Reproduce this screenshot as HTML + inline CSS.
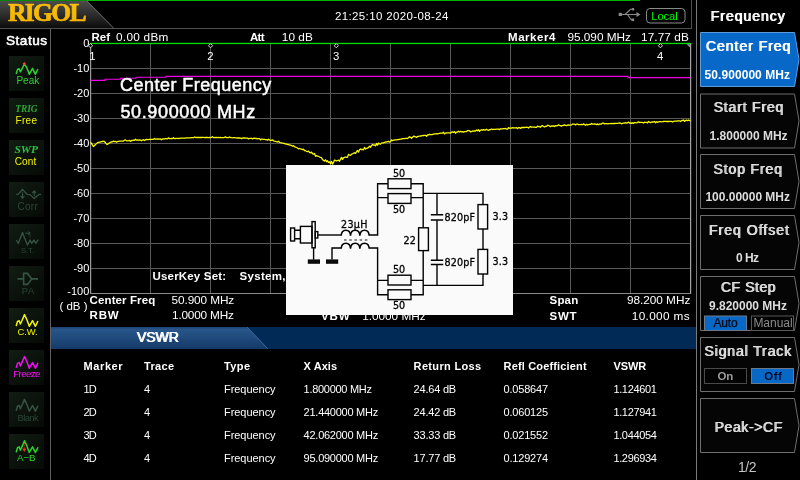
<!DOCTYPE html>
<html lang="en"><head><meta charset="utf-8"><title>RIGOL Spectrum Analyzer - VSWR</title>
<style>
html,body{margin:0;padding:0;background:#000;}
body{width:800px;height:480px;overflow:hidden;position:relative;font-family:"Liberation Sans",Arial,sans-serif;}
svg{position:absolute;left:0;top:0;display:block}
svg{font-family:"Liberation Sans",Arial,sans-serif;will-change:transform}
text{white-space:pre}
</style></head><body>
<svg width="800" height="480" viewBox="0 0 800 480">
<defs>
<linearGradient id="lg" x1="0" y1="0" x2="0" y2="1"><stop offset="0" stop-color="#4c4c4c"/><stop offset="0.55" stop-color="#2a2a2a"/><stop offset="1" stop-color="#0c0c0c"/></linearGradient>
<linearGradient id="gold" x1="0" y1="0" x2="0" y2="1"><stop offset="0" stop-color="#ffc20a"/><stop offset="1" stop-color="#f2b000"/></linearGradient>
<linearGradient id="bar" x1="0" y1="0" x2="0" y2="1"><stop offset="0" stop-color="#1d4472"/><stop offset="0.12" stop-color="#28568a"/><stop offset="1" stop-color="#143a68"/></linearGradient>
<linearGradient id="ib" x1="0" y1="0" x2="1" y2="1"><stop offset="0" stop-color="#121d13"/><stop offset="0.5" stop-color="#0b130c"/><stop offset="1" stop-color="#060a06"/></linearGradient>
<filter id="fb" x="-5%" y="-20%" width="110%" height="140%"><feOffset dx="0.9" dy="0" result="o"/><feMerge><feMergeNode in="SourceGraphic"/><feMergeNode in="o"/></feMerge></filter>
<path id="wave" d="M16.3,17.3 L17.5,13.3 L19.2,12.5 L20.4,15.8 L22.1,12 L24.5,6.4 L26.9,11.5 L29.3,18.1 L32.5,12.5 L35.4,18.1 L37.7,13.3" fill="none" stroke-width="1.5" stroke-linejoin="round" stroke-linecap="round"/>
<path id="wavep" d="M16.3,17.5 L17.5,13.6 L19.2,12.8 L20.4,15.9 L22,13 L24.4,8 L26.9,12 L29.3,18.4 L32.5,12.4 L35.4,18.4 L37.6,13.6" fill="none" stroke-width="1.5" stroke-linejoin="round" stroke-linecap="round"/>
</defs>
<rect width="800" height="480" fill="#000"/>

<polygon points="0,1 87,1 113.5,28 0,28" fill="url(#lg)"/>
<line x1="87" y1="1" x2="113.5" y2="28" stroke="#6a6a6a" stroke-width="1"/>
<rect x="0" y="0" width="87" height="1" fill="#008800"/>
<rect x="87" y="0" width="553" height="1" fill="#00b400"/>
<rect x="0" y="28" width="692" height="1" fill="#505050"/>
<rect x="691" y="0" width="1" height="29" fill="#505050"/>
<rect x="50" y="29" width="1" height="451" fill="#606060"/>
<rect x="696" y="0" width="1" height="480" fill="#7a7a7a"/>
<text x="8" y="21.3" font-size="25.6" font-weight="bold" fill="url(#gold)" textLength="78.6" lengthAdjust="spacing" font-family="Liberation Serif, Times New Roman, serif"  stroke="url(#gold)" stroke-width="0.7" stroke-linejoin="round">RIGOL</text>
<text x="335" y="20.45" font-size="11.5" fill="#fff" textLength="113.4" lengthAdjust="spacing">21:25:10 2020-08-24</text>
<g transform="translate(0,-0.5)" stroke="#8a8a8a" fill="#8a8a8a" stroke-width="1.1"><line x1="620" y1="15" x2="638" y2="15"/><rect x="618.7" y="13.3" width="3.2" height="3.2" stroke="none"/><polygon points="640.5,15 636.5,12.5 636.5,17.5" stroke="none"/><path d="M625,15 L630.5,9.8 L633,9.8" fill="none"/><path d="M627.5,15 L631,20.3 L632.5,20.3" fill="none"/><circle cx="633" cy="9.8" r="1.3" stroke="none"/><rect x="631.5" y="19" width="2.6" height="2.6" stroke="none"/></g>
<rect x="646.5" y="8.5" width="38.5" height="14.5" rx="3.5" fill="none" stroke="#8a8a8a" stroke-width="1"/>
<text x="651.2" y="20" font-size="11.2" fill="#00fa00" textLength="26.6" lengthAdjust="spacing">Local</text>
<text x="6" y="44.9" font-size="13.6" fill="#fff" textLength="41" lengthAdjust="spacing"  stroke="#fff" stroke-width="0.55" stroke-linejoin="round">Status</text>
<rect x="9" y="56" width="35" height="35" fill="url(#ib)"/>
<rect x="9" y="98" width="35" height="35" fill="url(#ib)"/>
<rect x="9" y="140" width="35" height="35" fill="url(#ib)"/>
<rect x="9" y="182" width="35" height="35" fill="url(#ib)"/>
<rect x="9" y="224" width="35" height="35" fill="url(#ib)"/>
<rect x="9" y="266" width="35" height="35" fill="url(#ib)"/>
<rect x="9" y="308" width="35" height="35" fill="url(#ib)"/>
<rect x="9" y="350" width="35" height="35" fill="url(#ib)"/>
<rect x="9" y="392" width="35" height="35" fill="url(#ib)"/>
<rect x="9" y="434" width="35" height="35" fill="url(#ib)"/>
<use href="#wavep" y="55.9" stroke="#2fd22f"/>
<path d="M24.3,61.6 L25,63 L26.3,63.6 L25,64.2 L24.3,65.6 L23.6,64.2 L22.3,63.6 L23.6,63 Z" fill="#f04030"/>
<text x="16.4" y="83.7" font-size="10" fill="#2fd22f" textLength="22.8" lengthAdjust="spacing">Peak</text>
<text x="15.2" y="111.6" font-size="9.4" font-weight="bold" fill="#2fa83a" textLength="22.4" lengthAdjust="spacing" font-family="Liberation Serif, Times New Roman, serif" font-style="italic">TRIG</text>
<text x="15.6" y="123.6" font-size="10" fill="#f4f400" textLength="21.4" lengthAdjust="spacing">Free</text>
<g transform="translate(14.4,152.8) scale(1.2,1)">
<text x="0" y="0" font-size="9.6" font-weight="bold" fill="#2fc040" font-family="Liberation Serif, Times New Roman, serif" font-style="italic">SWP</text>
</g>
<text x="14.8" y="165" font-size="10" fill="#f4f400" textLength="21.4" lengthAdjust="spacing">Cont</text>
<g stroke="#365442" fill="none" stroke-width="1.3" stroke-linejoin="round"><path d="M16.2,194.3 L18.4,194.2 L22.5,189.4 L27,194.3 L30,194.6 L34.2,198.6 L39.2,194.3 L41,194.3"/><path d="M22.5,192.4 V198 M20.6,196 L22.5,198.4 L24.4,196" stroke-width="1.1"/><path d="M34.2,196.2 V191.2 M32.3,193.2 L34.2,190.8 L36.1,193.2" stroke-width="1.1"/></g>
<text x="17.6" y="209.6" font-size="10" fill="#2b4737" textLength="20.2" lengthAdjust="spacing">Corr</text>
<g stroke="#365442" fill="none" stroke-width="1.3" stroke-linejoin="round"><path d="M16.3,240 L18.3,243.4 L20.4,238 L22.5,232.6 L24.6,238 L27.5,245 L30,240 L31.7,243.4 L33.8,240 L35.8,243.4 L38.3,239.6"/><path d="M25.4,233.2 H30 M28.2,231.6 L30.2,233.2 L28.2,234.8" stroke-width="1"/><path d="M30,234.5 V238.5" stroke-width="1" stroke-dasharray="1,1"/></g>
<text x="21" y="252.6" font-size="7.6" fill="#2b4737" textLength="13" lengthAdjust="spacing">S.T.</text>
<g stroke="#365442" fill="none" stroke-width="1.6" stroke-linejoin="miter"><path d="M17.5,278.9 H23.5 M31.7,278.9 H38"/><path d="M23.6,273.4 H27.5 L31.7,278.9 L27.5,284.4 H23.6 Z"/></g>
<text x="21.7" y="293.6" font-size="9.4" fill="#2b4737" textLength="12.6" lengthAdjust="spacing">PA</text>
<use href="#wave" y="308.2" stroke="#f4f400"/>
<text x="17.6" y="335" font-size="9.4" fill="#f4f400" textLength="20" lengthAdjust="spacing">C.W.</text>
<use href="#wave" y="350.1" stroke="#f010f0"/>
<text x="13.3" y="376.9" font-size="9.8" fill="#f010f0" textLength="27.2" lengthAdjust="spacing">Freeze</text>
<use href="#wave" y="393" stroke="#365442"/>
<text x="17.6" y="420.6" font-size="9.4" fill="#2b4737" textLength="21" lengthAdjust="spacing">Blank</text>
<use href="#wave" y="434.4" stroke="#2fd22f"/>
<path d="M24.3,443 L24.3,449" stroke="#f03020" stroke-width="1" stroke-dasharray="1.2,1" fill="none"/><path d="M22.3,448.5 L26.3,448.5 L24.3,452 Z" fill="#f03020"/>
<text x="17" y="461" font-size="9.8" fill="#2fd22f" textLength="18.6" lengthAdjust="spacing">A−B</text>
<rect x="150" y="44" width="1" height="250" fill="#585858"/>
<rect x="210" y="44" width="1" height="250" fill="#585858"/>
<rect x="270" y="44" width="1" height="250" fill="#585858"/>
<rect x="330" y="44" width="1" height="250" fill="#585858"/>
<rect x="390" y="44" width="1" height="250" fill="#585858"/>
<rect x="450" y="44" width="1" height="250" fill="#585858"/>
<rect x="510" y="44" width="1" height="250" fill="#585858"/>
<rect x="570" y="44" width="1" height="250" fill="#585858"/>
<rect x="630" y="44" width="1" height="250" fill="#585858"/>
<rect x="90" y="68" width="601" height="1" fill="#585858"/>
<rect x="90" y="93" width="601" height="1" fill="#585858"/>
<rect x="90" y="118" width="601" height="1" fill="#585858"/>
<rect x="90" y="143" width="601" height="1" fill="#585858"/>
<rect x="90" y="168" width="601" height="1" fill="#585858"/>
<rect x="90" y="193" width="601" height="1" fill="#585858"/>
<rect x="90" y="218" width="601" height="1" fill="#585858"/>
<rect x="90" y="243" width="601" height="1" fill="#585858"/>
<rect x="90" y="268" width="601" height="1" fill="#585858"/>
<rect x="90" y="43" width="1.2" height="251" fill="#9a9a9a"/>
<rect x="690" y="43" width="1.2" height="251" fill="#a4a4a4"/>
<rect x="90" y="293" width="601" height="1" fill="#8a8a8a"/>
<rect x="90" y="42.8" width="601" height="1.3" fill="#00e000"/>
<polygon points="686.5,44.3 690,44.3 690,47.5" fill="#909090"/>
<text x="89.3" y="47" font-size="11" fill="#fff" text-anchor="end">0</text>
<text x="89.3" y="72" font-size="11" fill="#fff" text-anchor="end">-10</text>
<text x="89.3" y="97" font-size="11" fill="#fff" text-anchor="end">-20</text>
<text x="89.3" y="122" font-size="11" fill="#fff" text-anchor="end">-30</text>
<text x="89.3" y="147" font-size="11" fill="#fff" text-anchor="end">-40</text>
<text x="89.3" y="172" font-size="11" fill="#fff" text-anchor="end">-50</text>
<text x="89.3" y="197" font-size="11" fill="#fff" text-anchor="end">-60</text>
<text x="89.3" y="222" font-size="11" fill="#fff" text-anchor="end">-70</text>
<text x="89.3" y="247" font-size="11" fill="#fff" text-anchor="end">-80</text>
<text x="89.3" y="272" font-size="11" fill="#fff" text-anchor="end">-90</text>
<text x="89.3" y="295.4" font-size="11" fill="#fff" text-anchor="end">-100</text>
<text x="59.5" y="310.2" font-size="11.5" fill="#fff" textLength="28" lengthAdjust="spacing">( dB )</text>
<text x="91.5" y="41.35" font-size="11.5" font-weight="bold" fill="#fff" textLength="18.6" lengthAdjust="spacing">Ref</text>
<text x="116" y="41.35" font-size="11.8" fill="#fff" textLength="52.4" lengthAdjust="spacing">0.00 dBm</text>
<text x="250" y="41.35" font-size="11.5" font-weight="bold" fill="#fff" textLength="14.6" lengthAdjust="spacing">Att</text>
<text x="281.8" y="41.35" font-size="11.8" fill="#fff" textLength="31" lengthAdjust="spacing">10 dB</text>
<text x="508" y="41.35" font-size="11.5" font-weight="bold" fill="#fff" textLength="47.4" lengthAdjust="spacing">Marker4</text>
<text x="567.6" y="41.35" font-size="11.8" fill="#fff" textLength="63.2" lengthAdjust="spacing">95.090 MHz</text>
<text x="641" y="41.35" font-size="11.8" fill="#fff" textLength="47.8" lengthAdjust="spacing">17.77 dB</text>
<path d="M90.5,43.6 L92.6,45.7 L90.5,47.8 L88.4,45.7 Z" fill="#000" stroke="#f0f0f0" stroke-width="0.9"/>
<text x="89.2" y="59.8" font-size="11.3" fill="#fff">1</text>
<path d="M210.5,43.6 L212.6,45.7 L210.5,47.8 L208.4,45.7 Z" fill="#000" stroke="#f0f0f0" stroke-width="0.9"/>
<text x="207.2" y="59.8" font-size="11.3" fill="#fff">2</text>
<path d="M336.3,43.6 L338.40000000000003,45.7 L336.3,47.8 L334.2,45.7 Z" fill="#000" stroke="#f0f0f0" stroke-width="0.9"/>
<text x="333.0" y="59.8" font-size="11.3" fill="#fff">3</text>
<path d="M660.4,43.6 L662.5,45.7 L660.4,47.8 L658.3,45.7 Z" fill="#000" stroke="#f0f0f0" stroke-width="0.9"/>
<text x="657.1" y="59.8" font-size="11.3" fill="#fff">4</text>
<path d="M90.5,80.4 H105 V79.3 H120.4 V78.3 H136 V77.3 H166 V76.4 H628 V77.6 H690.5" fill="none" stroke="#f000e8" stroke-width="1.1"/>
<path d="M90.5,142.0 L91.0,142.8 L91.5,143.5 L92.0,144.2 L92.5,145.0 L93.0,145.8 L93.5,146.5 L94.0,146.0 L94.5,145.5 L95.0,145.0 L95.5,144.6 L96.0,144.1 L96.5,143.6 L97.0,143.1 L97.5,142.6 L98.0,142.5 L98.5,142.4 L99.0,142.3 L99.5,142.2 L100.0,142.1 L100.5,142.0 L101.0,141.8 L101.5,141.7 L102.0,141.6 L102.5,141.5 L103.0,141.4 L103.5,141.3 L104.0,141.2 L104.5,141.8 L105.0,142.3 L105.5,142.8 L106.0,143.4 L106.5,143.9 L107.0,144.5 L107.5,144.2 L108.0,143.9 L108.5,143.6 L109.0,143.2 L109.5,142.9 L110.0,142.6 L110.5,142.3 L111.0,142.0 L111.5,142.0 L112.0,141.9 L112.5,141.8 L113.5,141.1 L114.5,141.6 L115.5,141.5 L116.5,142.1 L117.5,141.5 L118.5,141.4 L119.5,141.2 L120.5,141.1 L121.5,141.2 L122.5,141.1 L123.5,141.0 L124.5,140.2 L125.5,140.0 L126.5,140.8 L127.5,140.8 L128.5,140.7 L129.5,140.5 L130.5,141.4 L131.5,140.5 L132.5,140.3 L133.5,140.2 L134.5,140.3 L135.5,139.3 L136.5,140.2 L137.5,140.0 L138.5,140.1 L139.5,140.0 L140.5,140.1 L141.5,140.8 L142.5,140.0 L143.5,139.7 L144.5,140.5 L145.5,139.7 L146.5,139.5 L147.5,139.6 L148.5,139.6 L149.5,139.3 L150.5,139.3 L151.5,139.3 L152.5,139.4 L153.5,139.3 L154.5,138.5 L155.5,139.1 L156.5,139.2 L157.5,139.0 L158.5,139.0 L159.5,139.2 L160.5,139.0 L161.5,139.8 L162.5,138.9 L163.5,138.9 L164.5,139.0 L165.5,138.7 L166.5,138.7 L167.5,138.8 L168.5,137.9 L169.5,138.6 L170.5,138.6 L171.5,138.5 L172.5,138.7 L173.5,137.6 L174.5,138.6 L175.5,138.5 L176.5,138.3 L177.5,138.4 L178.5,138.5 L179.5,138.3 L180.5,138.2 L181.5,138.2 L182.5,138.1 L183.5,138.1 L184.5,138.1 L185.5,138.1 L186.5,137.9 L187.5,137.9 L188.5,137.8 L189.5,137.9 L190.5,137.8 L191.5,137.6 L192.5,137.6 L193.5,137.7 L194.5,137.0 L195.5,137.4 L196.5,137.5 L197.5,137.5 L198.5,137.5 L199.5,137.3 L200.5,137.5 L201.5,137.5 L202.5,137.3 L203.5,137.4 L204.5,137.6 L205.5,137.4 L206.5,137.5 L207.5,137.4 L208.5,137.6 L209.5,137.4 L210.5,137.6 L211.5,137.4 L212.5,136.6 L213.5,137.6 L214.5,137.6 L215.5,137.4 L216.5,137.5 L217.5,137.6 L218.5,137.5 L219.5,137.7 L220.5,137.5 L221.5,137.7 L222.5,137.7 L223.5,137.6 L224.5,137.4 L225.5,136.8 L226.5,137.6 L227.5,137.6 L228.5,137.6 L229.5,137.0 L230.5,137.5 L231.5,137.7 L232.5,137.8 L233.5,137.7 L234.5,137.7 L235.5,137.8 L236.5,137.8 L237.5,138.0 L238.5,138.0 L239.5,137.8 L240.5,138.1 L241.5,138.6 L242.5,138.1 L243.5,137.9 L244.5,138.0 L245.5,138.2 L246.5,138.1 L247.5,138.1 L248.5,138.9 L249.5,138.3 L250.5,138.3 L251.5,138.3 L252.5,138.9 L253.5,138.4 L254.5,138.2 L255.5,138.5 L256.5,138.4 L257.5,138.8 L258.5,138.7 L259.5,138.7 L260.5,139.9 L261.5,139.1 L262.5,139.2 L263.5,139.3 L264.5,139.4 L265.5,139.6 L266.5,139.7 L267.5,140.2 L268.5,139.2 L269.5,139.9 L270.5,140.3 L271.5,140.3 L272.5,139.8 L273.5,140.8 L274.5,141.2 L275.5,141.3 L276.5,141.7 L277.5,142.0 L278.5,141.2 L279.5,142.3 L280.5,142.7 L281.5,142.9 L282.5,143.2 L283.5,143.3 L284.5,143.5 L285.5,144.0 L286.5,144.0 L287.5,144.5 L288.5,144.5 L289.5,145.0 L290.5,145.1 L291.5,145.5 L292.5,146.1 L293.5,145.7 L294.5,146.7 L295.5,147.2 L296.5,147.5 L297.5,148.0 L298.5,148.8 L299.5,148.5 L300.5,148.9 L301.5,149.2 L302.5,149.6 L303.5,149.2 L304.5,150.6 L305.5,150.7 L306.5,151.3 L307.5,151.6 L308.5,151.1 L309.5,152.4 L310.5,152.8 L311.5,152.1 L312.5,153.7 L313.5,154.2 L314.5,153.4 L315.5,156.3 L316.5,155.6 L317.5,156.1 L318.5,156.3 L319.5,157.0 L320.5,157.4 L321.5,157.7 L322.5,159.6 L323.5,160.4 L324.5,161.0 L325.5,159.8 L326.5,161.8 L327.5,160.8 L328.5,162.5 L329.5,161.8 L330.5,163.8 L331.5,161.4 L332.5,164.1 L333.5,162.4 L334.5,160.1 L335.5,160.4 L336.5,161.0 L337.5,160.5 L338.5,160.2 L339.5,161.2 L340.5,159.2 L341.5,157.4 L342.5,159.4 L343.5,157.9 L344.5,157.3 L345.5,157.0 L346.5,157.4 L347.5,157.3 L348.5,154.4 L349.5,155.0 L350.5,155.4 L351.5,154.1 L352.5,153.8 L353.5,153.2 L354.5,152.9 L355.5,153.4 L356.5,151.9 L357.5,150.5 L358.5,152.1 L359.5,149.8 L360.5,149.0 L361.5,149.6 L362.5,149.3 L363.5,149.8 L364.5,147.4 L365.5,149.0 L366.5,148.4 L367.5,148.1 L368.5,147.4 L369.5,146.2 L370.5,147.2 L371.5,145.6 L372.5,144.5 L373.5,145.1 L374.5,145.0 L375.5,145.9 L376.5,143.4 L377.5,145.1 L378.5,143.1 L379.5,143.8 L380.5,144.1 L381.5,143.1 L382.5,142.8 L383.5,142.8 L384.5,142.3 L385.5,142.0 L386.5,142.0 L387.5,141.6 L388.5,141.3 L389.5,142.0 L390.5,141.8 L391.5,139.9 L392.5,140.7 L393.5,140.2 L394.5,140.2 L395.5,139.9 L396.5,139.9 L397.5,139.6 L398.5,139.5 L399.5,139.3 L400.5,139.2 L401.5,139.1 L402.5,138.7 L403.5,138.6 L404.5,138.6 L405.5,138.3 L406.5,138.3 L407.5,138.6 L408.5,137.8 L409.5,136.7 L410.5,137.3 L411.5,138.3 L412.5,137.3 L413.5,136.2 L414.5,136.3 L415.5,136.8 L416.5,137.4 L417.5,136.5 L418.5,136.3 L419.5,136.2 L420.5,136.0 L421.5,135.9 L422.5,135.7 L423.5,135.5 L424.5,135.3 L425.5,135.3 L426.5,136.3 L427.5,135.0 L428.5,134.9 L429.5,134.3 L430.5,134.7 L431.5,134.6 L432.5,134.5 L433.5,134.1 L434.5,133.9 L435.5,133.9 L436.5,133.7 L437.5,133.8 L438.5,133.6 L439.5,133.4 L440.5,133.2 L441.5,133.2 L442.5,133.2 L443.5,132.3 L444.5,133.9 L445.5,133.1 L446.5,132.8 L447.5,132.9 L448.5,132.8 L449.5,132.8 L450.5,133.2 L451.5,132.1 L452.5,131.8 L453.5,132.4 L454.5,131.7 L455.5,133.2 L456.5,132.1 L457.5,132.1 L458.5,131.2 L459.5,132.0 L460.5,131.4 L461.5,131.9 L462.5,131.7 L463.5,132.1 L464.5,131.7 L465.5,131.7 L466.5,131.5 L467.5,130.7 L468.5,130.6 L469.5,130.6 L470.5,131.9 L471.5,131.7 L472.5,130.9 L473.5,131.1 L474.5,130.9 L475.5,131.0 L476.5,130.0 L477.5,130.8 L478.5,129.8 L479.5,131.4 L480.5,130.3 L481.5,129.7 L482.5,130.3 L483.5,129.6 L484.5,130.0 L485.5,130.0 L486.5,129.3 L487.5,130.0 L488.5,130.4 L489.5,129.7 L490.5,129.7 L491.5,129.0 L492.5,129.5 L493.5,129.3 L494.5,129.3 L495.5,129.3 L496.5,129.2 L497.5,129.2 L498.5,129.1 L499.5,129.6 L500.5,128.9 L501.5,128.9 L502.5,128.9 L503.5,128.6 L504.5,128.6 L505.5,128.5 L506.5,129.1 L507.5,129.1 L508.5,127.6 L509.5,128.3 L510.5,128.1 L511.5,128.1 L512.5,127.7 L513.5,128.0 L514.5,127.9 L515.5,127.8 L516.5,127.7 L517.5,128.6 L518.5,127.7 L519.5,127.6 L520.5,128.4 L521.5,127.5 L522.5,127.4 L523.5,127.5 L524.5,127.5 L525.5,127.4 L526.5,127.2 L527.5,127.3 L528.5,128.0 L529.5,127.1 L530.5,126.5 L531.5,127.1 L532.5,127.1 L533.5,127.1 L534.5,127.0 L535.5,127.4 L536.5,127.3 L537.5,126.1 L538.5,126.6 L539.5,126.6 L540.5,127.2 L541.5,125.8 L542.5,125.7 L543.5,126.5 L544.5,127.0 L545.5,126.3 L546.5,126.3 L547.5,125.4 L548.5,125.3 L549.5,126.0 L550.5,126.6 L551.5,126.0 L552.5,126.0 L553.5,125.8 L554.5,126.5 L555.5,125.6 L556.5,125.8 L557.5,125.7 L558.5,124.8 L559.5,125.4 L560.5,125.6 L561.5,126.1 L562.5,125.5 L563.5,125.3 L564.5,124.9 L565.5,125.4 L566.5,125.6 L567.5,125.1 L568.5,125.0 L569.5,125.2 L570.5,125.1 L571.5,124.9 L572.5,124.1 L573.5,124.2 L574.5,124.2 L575.5,124.9 L576.5,124.1 L577.5,124.1 L578.5,124.6 L579.5,124.6 L580.5,124.7 L581.5,124.5 L582.5,124.7 L583.5,123.9 L584.5,124.6 L585.5,125.2 L586.5,124.3 L587.5,125.0 L588.5,124.7 L589.5,124.4 L590.5,124.4 L591.5,123.5 L592.5,124.1 L593.5,124.1 L594.5,124.0 L595.5,124.2 L596.5,124.6 L597.5,123.9 L598.5,124.7 L599.5,124.0 L600.5,124.1 L601.5,124.0 L602.5,123.1 L603.5,123.1 L604.5,123.9 L605.5,123.6 L606.5,123.6 L607.5,123.8 L608.5,123.6 L609.5,123.6 L610.5,123.6 L611.5,123.4 L612.5,123.6 L613.5,123.4 L614.5,123.5 L615.5,123.3 L616.5,123.4 L617.5,123.3 L618.5,123.2 L619.5,122.8 L620.5,123.2 L621.5,123.8 L622.5,123.3 L623.5,123.2 L624.5,123.2 L625.5,122.4 L626.5,123.2 L627.5,122.9 L628.5,122.1 L629.5,123.0 L630.5,122.8 L631.5,123.4 L632.5,122.7 L633.5,123.4 L634.5,122.6 L635.5,122.7 L636.5,122.8 L637.5,122.6 L638.5,121.8 L639.5,122.6 L640.5,122.4 L641.5,122.3 L642.5,122.5 L643.5,123.0 L644.5,122.2 L645.5,122.3 L646.5,122.4 L647.5,122.9 L648.5,121.5 L649.5,122.2 L650.5,122.7 L651.5,122.1 L652.5,122.0 L653.5,122.0 L654.5,121.5 L655.5,122.7 L656.5,121.8 L657.5,122.4 L658.5,121.8 L659.5,121.6 L660.5,121.7 L661.5,121.8 L662.5,121.7 L663.5,121.5 L664.5,121.4 L665.5,121.4 L666.5,121.5 L667.5,121.3 L668.5,121.5 L669.5,121.3 L670.5,121.4 L671.5,121.3 L672.5,122.0 L673.5,121.3 L674.5,121.1 L675.5,121.2 L676.5,121.1 L677.5,121.0 L678.5,120.9 L679.5,120.8 L680.5,121.6 L681.5,120.7 L682.5,120.3 L683.5,120.0 L684.5,121.4 L685.5,120.6 L686.5,120.1 L687.5,120.7 L688.5,120.0 L689.5,120.6 L690.5,120.6" fill="none" stroke="#fafa00" stroke-width="1.3" stroke-linejoin="round"/>
<text x="120" y="90.6" font-size="18" fill="#fff" textLength="151.2" lengthAdjust="spacing"  stroke="#fff" stroke-width="0.5" stroke-linejoin="round">Center Frequency</text>
<text x="120.4" y="117.6" font-size="18" fill="#fff" textLength="134.8" lengthAdjust="spacing"  stroke="#fff" stroke-width="0.5" stroke-linejoin="round">50.900000 MHz</text>
<text x="152.5" y="279.6" font-size="11.5" font-weight="bold" fill="#fff" textLength="73.6" lengthAdjust="spacing">UserKey Set:</text>
<text x="239.5" y="279.6" font-size="11.5" font-weight="bold" fill="#fff" textLength="46" lengthAdjust="spacing">System,</text>
<text x="89.6" y="303.6" font-size="11.5" font-weight="bold" fill="#fff" textLength="65.6" lengthAdjust="spacing">Center Freq</text>
<text x="171.6" y="303.8" font-size="11.8" fill="#fff" textLength="62.6" lengthAdjust="spacing">50.900 MHz</text>
<text x="89.6" y="319.2" font-size="11.5" font-weight="bold" fill="#fff" textLength="29" lengthAdjust="spacing">RBW</text>
<text x="172" y="319.4" font-size="11.8" fill="#fff" textLength="62" lengthAdjust="spacing">1.0000 MHz</text>
<text x="549.6" y="303.6" font-size="11.5" font-weight="bold" fill="#fff" textLength="28.6" lengthAdjust="spacing">Span</text>
<text x="690.3" y="303.8" font-size="11.8" fill="#fff" textLength="63.4" lengthAdjust="spacing" text-anchor="end">98.200 MHz</text>
<text x="549.6" y="319.6" font-size="11.5" font-weight="bold" fill="#fff" textLength="27" lengthAdjust="spacing">SWT</text>
<text x="689.6" y="319.8" font-size="11.8" fill="#fff" textLength="57.8" lengthAdjust="spacing" text-anchor="end">10.000 ms</text>
<text x="321" y="319.6" font-size="11.5" font-weight="bold" fill="#fff" textLength="28.6" lengthAdjust="spacing">VBW</text>
<text x="362.2" y="319.8" font-size="11.8" fill="#fff" textLength="63.4" lengthAdjust="spacing">1.0000 MHz</text>
<g>
<rect x="286" y="165" width="227" height="150" fill="#fafafa"/>
<g fill="none" stroke="#000" stroke-width="1.4">
<rect x="290.6" y="228" width="4" height="13"/>
<path d="M294.6,230.3 H300.4 M294.6,238.7 H300.4"/>
<rect x="300.4" y="226.4" width="11.6" height="16.6"/>
<rect x="312" y="221.6" width="3.2" height="26.2"/>
<rect x="315.2" y="231.6" width="2.6" height="6.4"/>
<path d="M317.8,235 H341.2"/>
<path d="M313.6,247.8 V259.6"/>
<path d="M332,259.6 V248 H341.2"/>
<path d="M341.2,235.6 C341.50,228.4 350.23,228.4 350.53,235.6 C350.83,228.4 359.56,228.4 359.86,235.6 C360.16,228.4 368.89,228.4 369.19,235.6" stroke-width="1.5"/>
<path d="M341.2,248.6 C341.50,241.4 350.23,241.4 350.53,248.6 C350.83,241.4 359.56,241.4 359.86,248.6 C360.16,241.4 368.89,241.4 369.19,248.6" stroke-width="1.5"/>
<path d="M344,240 H368" stroke-dasharray="2.6,2.6" stroke-width="1" stroke="#1a1a1a"/>
<path d="M369.2,235 H377.6 V183.8 H388 M377.6,197.6 H388"/>
<path d="M369.2,248 H377.6 V294.8 H388 M377.6,280.4 H388"/>
<rect x="388" y="178.8" width="23" height="9.8" fill="#fafafa"/>
<rect x="388" y="193.6" width="23" height="9.8" fill="#fafafa"/>
<rect x="388" y="275.2" width="23" height="9.8" fill="#fafafa"/>
<rect x="388" y="289.8" width="23" height="9.8" fill="#fafafa"/>
<path d="M411,183.8 H423.2 V227.8 M411,197.6 H423.2 M423.2,193.4 H483 V204.6"/>
<path d="M411,280.4 H423.2 M411,294.8 H423.2 V250.6 M423.2,285.4 H483 V274"/>
<rect x="418.6" y="227.8" width="9.8" height="22.8"/>
<path d="M437,193.4 V214.6 M437,220.2 V260 M437,264.6 V285.4"/>
<path d="M430.8,214.8 H443.2 M430.8,220 H443.2 M430.8,260.2 H443.2 M430.8,264.6 H443.2" stroke-width="1.5"/>
<rect x="478" y="204.6" width="9.6" height="24.4"/>
<rect x="478" y="249.4" width="9.6" height="24.6"/>
<path d="M483,229 V249.4"/>
</g>
<rect x="307.8" y="259.4" width="12.2" height="4.4" fill="#0a0a0a"/>
<rect x="326" y="259.4" width="12.2" height="4.4" fill="#0a0a0a"/>
<text x="341" y="227.6" font-size="9.6" fill="#000" textLength="26.4" lengthAdjust="spacing" font-family="DejaVu Sans, Liberation Sans, sans-serif"  stroke="#000" stroke-width="0.3" stroke-linejoin="round">23µH</text>
<text x="393" y="176.6" font-size="9.6" fill="#000" textLength="12.2" lengthAdjust="spacing" font-family="DejaVu Sans, Liberation Sans, sans-serif"  stroke="#000" stroke-width="0.3" stroke-linejoin="round">50</text>
<text x="393" y="213" font-size="9.6" fill="#000" textLength="12.2" lengthAdjust="spacing" font-family="DejaVu Sans, Liberation Sans, sans-serif"  stroke="#000" stroke-width="0.3" stroke-linejoin="round">50</text>
<text x="393" y="272.6" font-size="9.6" fill="#000" textLength="12.2" lengthAdjust="spacing" font-family="DejaVu Sans, Liberation Sans, sans-serif"  stroke="#000" stroke-width="0.3" stroke-linejoin="round">50</text>
<text x="393" y="308.8" font-size="9.6" fill="#000" textLength="12.2" lengthAdjust="spacing" font-family="DejaVu Sans, Liberation Sans, sans-serif"  stroke="#000" stroke-width="0.3" stroke-linejoin="round">50</text>
<text x="403.6" y="243.6" font-size="9.6" fill="#000" textLength="12.2" lengthAdjust="spacing" font-family="DejaVu Sans, Liberation Sans, sans-serif"  stroke="#000" stroke-width="0.3" stroke-linejoin="round">22</text>
<text x="444.6" y="221.3" font-size="9.6" fill="#000" textLength="30.4" lengthAdjust="spacing" font-family="DejaVu Sans, Liberation Sans, sans-serif"  stroke="#000" stroke-width="0.3" stroke-linejoin="round">820pF</text>
<text x="444.6" y="266.4" font-size="9.6" fill="#000" textLength="30.4" lengthAdjust="spacing" font-family="DejaVu Sans, Liberation Sans, sans-serif"  stroke="#000" stroke-width="0.3" stroke-linejoin="round">820pF</text>
<text x="492.6" y="219.8" font-size="9.6" fill="#000" textLength="15.4" lengthAdjust="spacing" font-family="DejaVu Sans, Liberation Sans, sans-serif"  stroke="#000" stroke-width="0.3" stroke-linejoin="round">3.3</text>
<text x="492.6" y="265" font-size="9.6" fill="#000" textLength="15.4" lengthAdjust="spacing" font-family="DejaVu Sans, Liberation Sans, sans-serif"  stroke="#000" stroke-width="0.3" stroke-linejoin="round">3.3</text>
</g>
<rect x="51" y="327" width="645" height="22" fill="#022a56"/>
<polygon points="51,327 247,327 268,349 51,349" fill="url(#bar)"/>
<line x1="247" y1="327" x2="268" y2="349" stroke="#3a6a9c" stroke-width="1"/>
<text x="136.6" y="342.4" font-size="14" fill="#fff" textLength="41.7" lengthAdjust="spacing"  filter="url(#fb)">VSWR</text>
<text x="83.6" y="370" font-size="11" font-weight="bold" fill="#fff" textLength="39" lengthAdjust="spacing">Marker</text>
<text x="144" y="370" font-size="11" font-weight="bold" fill="#fff" textLength="30" lengthAdjust="spacing">Trace</text>
<text x="224" y="370" font-size="11" font-weight="bold" fill="#fff" textLength="26" lengthAdjust="spacing">Type</text>
<text x="303.6" y="370" font-size="11" font-weight="bold" fill="#fff" textLength="33.4" lengthAdjust="spacing">X Axis</text>
<text x="413.6" y="370" font-size="11" font-weight="bold" fill="#fff" textLength="67.6" lengthAdjust="spacing">Return Loss</text>
<text x="503.6" y="370" font-size="11" font-weight="bold" fill="#fff" textLength="83" lengthAdjust="spacing">Refl Coefficient</text>
<text x="613.4" y="370" font-size="11" font-weight="bold" fill="#fff" textLength="32.8" lengthAdjust="spacing">VSWR</text>
<text x="83.6" y="393" font-size="11" fill="#fff" textLength="13.2" lengthAdjust="spacing">1D</text>
<text x="144" y="393" font-size="11" fill="#fff" textLength="5.6" lengthAdjust="spacing">4</text>
<text x="224" y="393" font-size="11" fill="#fff" textLength="51.6" lengthAdjust="spacing">Frequency</text>
<text x="303.6" y="393" font-size="11" fill="#fff" textLength="68.4" lengthAdjust="spacing">1.800000 MHz</text>
<text x="413.6" y="393" font-size="11" fill="#fff" textLength="42.6" lengthAdjust="spacing">24.64 dB</text>
<text x="503.6" y="393" font-size="11" fill="#fff" textLength="44.4" lengthAdjust="spacing">0.058647</text>
<text x="613.4" y="393" font-size="11" fill="#fff" textLength="43.4" lengthAdjust="spacing">1.124601</text>
<text x="83.6" y="416" font-size="11" fill="#fff" textLength="13.2" lengthAdjust="spacing">2D</text>
<text x="144" y="416" font-size="11" fill="#fff" textLength="5.6" lengthAdjust="spacing">4</text>
<text x="224" y="416" font-size="11" fill="#fff" textLength="51.6" lengthAdjust="spacing">Frequency</text>
<text x="303.6" y="416" font-size="11" fill="#fff" textLength="74.6" lengthAdjust="spacing">21.440000 MHz</text>
<text x="413.6" y="416" font-size="11" fill="#fff" textLength="42.6" lengthAdjust="spacing">24.42 dB</text>
<text x="503.6" y="416" font-size="11" fill="#fff" textLength="44.4" lengthAdjust="spacing">0.060125</text>
<text x="613.4" y="416" font-size="11" fill="#fff" textLength="43.4" lengthAdjust="spacing">1.127941</text>
<text x="83.6" y="439" font-size="11" fill="#fff" textLength="13.2" lengthAdjust="spacing">3D</text>
<text x="144" y="439" font-size="11" fill="#fff" textLength="5.6" lengthAdjust="spacing">4</text>
<text x="224" y="439" font-size="11" fill="#fff" textLength="51.6" lengthAdjust="spacing">Frequency</text>
<text x="303.6" y="439" font-size="11" fill="#fff" textLength="74.6" lengthAdjust="spacing">42.062000 MHz</text>
<text x="413.6" y="439" font-size="11" fill="#fff" textLength="42.6" lengthAdjust="spacing">33.33 dB</text>
<text x="503.6" y="439" font-size="11" fill="#fff" textLength="44.4" lengthAdjust="spacing">0.021552</text>
<text x="613.4" y="439" font-size="11" fill="#fff" textLength="43.4" lengthAdjust="spacing">1.044054</text>
<text x="83.6" y="462" font-size="11" fill="#fff" textLength="13.2" lengthAdjust="spacing">4D</text>
<text x="144" y="462" font-size="11" fill="#fff" textLength="5.6" lengthAdjust="spacing">4</text>
<text x="224" y="462" font-size="11" fill="#fff" textLength="51.6" lengthAdjust="spacing">Frequency</text>
<text x="303.6" y="462" font-size="11" fill="#fff" textLength="74.6" lengthAdjust="spacing">95.090000 MHz</text>
<text x="413.6" y="462" font-size="11" fill="#fff" textLength="42.6" lengthAdjust="spacing">17.77 dB</text>
<text x="503.6" y="462" font-size="11" fill="#fff" textLength="44.4" lengthAdjust="spacing">0.129274</text>
<text x="613.4" y="462" font-size="11" fill="#fff" textLength="43.4" lengthAdjust="spacing">1.296934</text>
<text x="710.2" y="21.4" font-size="14" fill="#fff" textLength="74.1" lengthAdjust="spacing"  filter="url(#fb)">Frequency</text>
<path d="M700.5,32.5 H794.5 L799,59.5 L794.5,86.5 H700.5 Z" fill="#0868c8" stroke="#5c9cd8" stroke-width="1"/>
<path d="M700.5,94.0 H794.5 L799,121.0 L794.5,148.0 H700.5 Z" fill="#050505" stroke="#6e6e6e" stroke-width="1"/>
<path d="M700.5,154.5 H794.5 L799,181.5 L794.5,208.5 H700.5 Z" fill="#050505" stroke="#6e6e6e" stroke-width="1"/>
<path d="M700.5,215.5 H794.5 L799,242.5 L794.5,269.5 H700.5 Z" fill="#050505" stroke="#6e6e6e" stroke-width="1"/>
<path d="M700.5,276.5 H794.5 L799,303.5 L794.5,330.5 H700.5 Z" fill="#050505" stroke="#6e6e6e" stroke-width="1"/>
<path d="M700.5,337.5 H794.5 L799,364.5 L794.5,391.5 H700.5 Z" fill="#050505" stroke="#6e6e6e" stroke-width="1"/>
<path d="M700.5,398.5 H794.5 L799,425.5 L794.5,452.5 H700.5 Z" fill="#050505" stroke="#6e6e6e" stroke-width="1"/>
<text x="705.4" y="51.4" font-size="14" fill="#fff" textLength="84.5" lengthAdjust="spacing"  filter="url(#fb)">Center Freq</text>
<text x="704.6" y="79" font-size="12" font-weight="bold" fill="#fff" textLength="85.4" lengthAdjust="spacing">50.900000 MHz</text>
<text x="713.2" y="112.4" font-size="14" fill="#dcdcdc" textLength="69.69999999999999" lengthAdjust="spacing"  filter="url(#fb)">Start Freq</text>
<text x="709.6" y="139.8" font-size="12" font-weight="bold" fill="#dcdcdc" textLength="78" lengthAdjust="spacing">1.800000 MHz</text>
<text x="713" y="173.6" font-size="14" fill="#dcdcdc" textLength="68.5" lengthAdjust="spacing"  filter="url(#fb)">Stop Freq</text>
<text x="705.4" y="201" font-size="12" font-weight="bold" fill="#dcdcdc" textLength="84.6" lengthAdjust="spacing">100.00000 MHz</text>
<text x="708.4" y="234.6" font-size="14" fill="#dcdcdc" textLength="80.1" lengthAdjust="spacing"  filter="url(#fb)">Freq Offset</text>
<text x="736" y="261.6" font-size="12" font-weight="bold" fill="#dcdcdc" textLength="23" lengthAdjust="spacing">0 Hz</text>
<text x="720.4" y="291.6" font-size="14" fill="#dcdcdc" textLength="54.7" lengthAdjust="spacing"  filter="url(#fb)">CF Step</text>
<text x="709" y="309.8" font-size="12" font-weight="bold" fill="#dcdcdc" textLength="78" lengthAdjust="spacing">9.820000 MHz</text>
<rect x="704.5" y="316" width="42" height="14.5" fill="#0868c8" stroke="#6a7a8a" stroke-width="1"/>
<text x="713.6" y="326.8" font-size="12" fill="#000814" textLength="24" lengthAdjust="spacing"  stroke="#000814" stroke-width="0.25" stroke-linejoin="round">Auto</text>
<rect x="751.5" y="316" width="42" height="14.5" fill="#030303" stroke="#585858" stroke-width="1"/>
<text x="753.4" y="326.8" font-size="12" fill="#8c8c8c" textLength="39.2" lengthAdjust="spacing">Manual</text>
<text x="704" y="356" font-size="14" fill="#dcdcdc" textLength="86.69999999999999" lengthAdjust="spacing"  filter="url(#fb)">Signal Track</text>
<rect x="704.5" y="368.5" width="42" height="15" fill="#030303" stroke="#4a4a4a" stroke-width="1"/>
<text x="717.6" y="379.6" font-size="11.5" font-weight="bold" fill="#9a9a9a" textLength="15.6" lengthAdjust="spacing">On</text>
<rect x="751.5" y="368.5" width="42" height="15" fill="#0868c8" stroke="#6a7a8a" stroke-width="1"/>
<text x="764.2" y="379.6" font-size="11.5" font-weight="bold" fill="#000820" textLength="17.6" lengthAdjust="spacing">Off</text>
<text x="714.2" y="431.6" font-size="14" fill="#dcdcdc" textLength="67.5" lengthAdjust="spacing"  filter="url(#fb)">Peak-&gt;CF</text>
<text x="738" y="472.4" font-size="14" fill="#c4c4c4" textLength="18.6" lengthAdjust="spacing">1/2</text>
</svg></body></html>
